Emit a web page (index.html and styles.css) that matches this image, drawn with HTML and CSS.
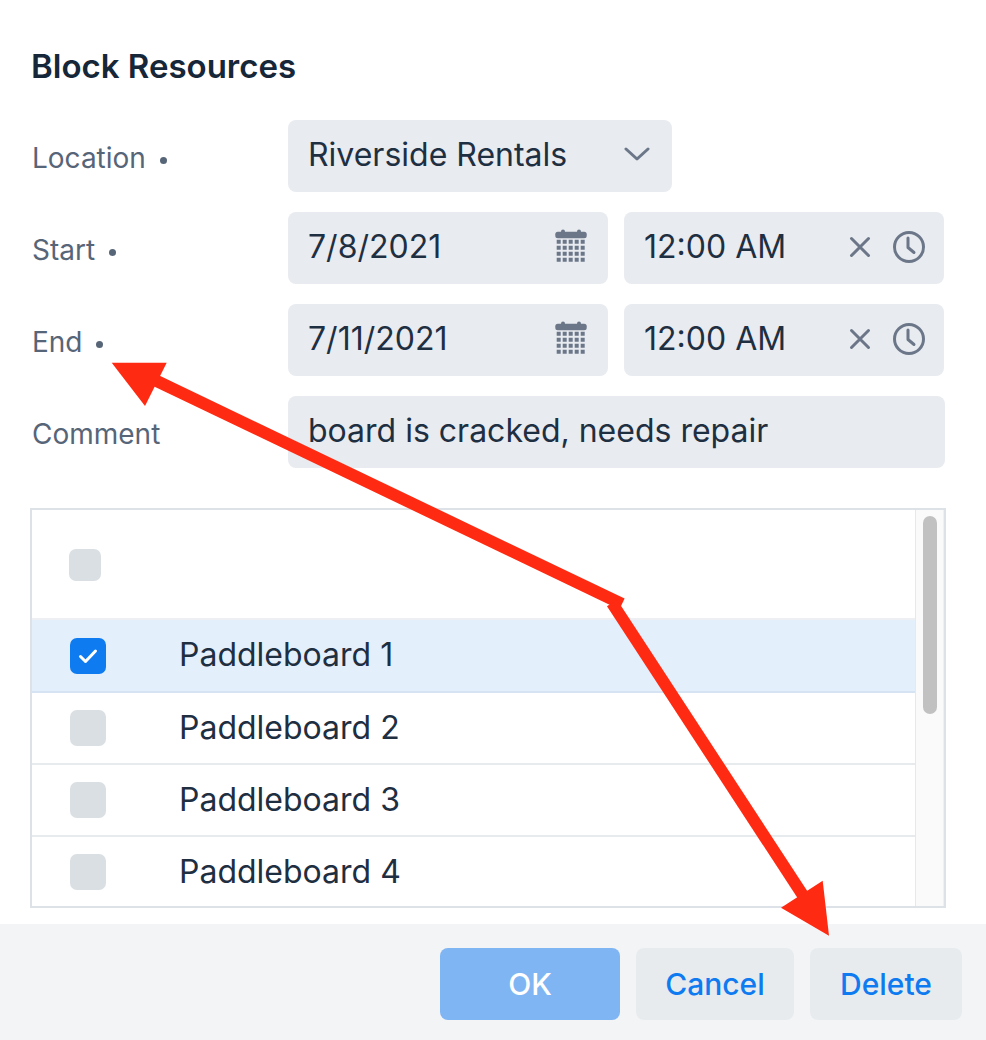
FILE: index.html
```html
<!DOCTYPE html>
<html lang="en">

<head>
    <meta charset="UTF-8">
    <title>Block Resources</title>
    <link rel="stylesheet" href="styles.css">
</head>

<body>

    <div class="dialog">
        <h1>Block Resources</h1>

        <!-- Form -->
        <div class="form-row">
            <label>Location <span class="req"></span></label>
            <div class="field select">
                <span>Riverside Rentals</span>
                <svg class="chevron" width="26" height="14" viewBox="0 0 26 14"><path d="M2 2l11 10L24 2" fill="none" stroke="#6b7788" stroke-width="3" stroke-linecap="round" stroke-linejoin="round"/></svg>
            </div>
        </div>
        <div class="form-row">
            <label>Start <span class="req"></span></label>
            <div class="field date">
                <span>7/8/2021</span>
                <svg class="cal" width="32" height="34" viewBox="0 0 32 34"><use href="#cal-icon"/></svg>
            </div>
            <div class="field time">
                <span>12:00 AM</span>
                <svg class="clear" width="22" height="22" viewBox="0 0 22 22"><path d="M2.5 2.5l17 17M19.5 2.5l-17 17" stroke="#6b7788" stroke-width="3" stroke-linecap="round"/></svg>
                <svg class="clock" width="34" height="34" viewBox="0 0 34 34"><use href="#clock-icon"/></svg>
            </div>
        </div>
        <div class="form-row">
            <label>End <span class="req"></span></label>
            <div class="field date">
                <span>7/11/2021</span>
                <svg class="cal" width="32" height="34" viewBox="0 0 32 34"><use href="#cal-icon"/></svg>
            </div>
            <div class="field time">
                <span>12:00 AM</span>
                <svg class="clear" width="22" height="22" viewBox="0 0 22 22"><path d="M2.5 2.5l17 17M19.5 2.5l-17 17" stroke="#6b7788" stroke-width="3" stroke-linecap="round"/></svg>
                <svg class="clock" width="34" height="34" viewBox="0 0 34 34"><use href="#clock-icon"/></svg>
            </div>
        </div>
        <div class="form-row">
            <label>Comment</label>
            <div class="field comment"><span>board is cracked, needs repair</span></div>
        </div>

        <!-- Resource list -->
        <div class="list">
            <div class="list-rows">
                <div class="list-head"><span class="check small"></span></div>
                <div class="list-row selected">
                    <span class="check on">
                        <svg width="20" height="16" viewBox="0 0 20 16"><path d="M2.5 8.5l5 5L17.5 3" fill="none" stroke="#fff" stroke-width="3" stroke-linecap="round" stroke-linejoin="round"/></svg>
                    </span>
                    <span>Paddleboard 1</span>
                </div>
                <div class="list-row"><span class="check"></span><span>Paddleboard 2</span></div>
                <div class="list-row"><span class="check"></span><span>Paddleboard 3</span></div>
                <div class="list-row"><span class="check"></span><span>Paddleboard 4</span></div>
            </div>
            <div class="scrollbar"><div class="thumb"></div></div>
        </div>

        <!-- Buttons -->
        <div class="footer">
            <button class="ok">OK</button>
            <button class="cancel">Cancel</button>
            <button class="delete">Delete</button>
        </div>
    </div>

    <!-- Shared icons -->
    <svg class="defs" width="0" height="0">
        <defs>
            <g id="cal-icon" fill="#6b7788">
                <rect x="0.3" y="2.7" width="31.4" height="6.6" rx="2.5"/>
                <rect x="6" y="0.6" width="4" height="4" rx="2"/>
                <rect x="22" y="0.6" width="4" height="4" rx="2"/>
                <path d="M1.7 10.7h4v4h-4zM7.7 10.7h4v4h-4zM13.7 10.7h4v4h-4zM19.7 10.7h4v4h-4zM25.7 10.7h4v4h-4z"/>
                <path d="M1.7 16.7h4v4h-4zM7.7 16.7h4v4h-4zM13.7 16.7h4v4h-4zM19.7 16.7h4v4h-4zM25.7 16.7h4v4h-4z"/>
                <path d="M1.7 22.7h4v4h-4zM7.7 22.7h4v4h-4zM13.7 22.7h4v4h-4zM19.7 22.7h4v4h-4zM25.7 22.7h4v4h-4z"/>
                <path d="M1.7 28.7h4v4h-4zM7.7 28.7h4v4h-4zM13.7 28.7h4v4h-4zM19.7 28.7h4v4h-4zM25.7 28.7h4v4h-4z"/>
            </g>
            <g id="clock-icon" fill="none" stroke="#6b7788" stroke-width="3" stroke-linecap="round" stroke-linejoin="round">
                <circle cx="17" cy="17" r="14.5"/>
                <path d="M16 8v9.500l6 5"/>
            </g>
        </defs>
    </svg>

    <!-- Annotation arrows drawn over the dialog -->
    <svg class="arrows" width="986" height="1040" viewBox="0 0 986 1040">
        <path d="M622 604L140 373" fill="none" stroke="#ff2a12" stroke-width="12"/>
        <path d="M612 603L806 900" fill="none" stroke="#ff2a12" stroke-width="12"/>
        <path d="M111.700 362.700L166.700 362.700L145 406z" fill="#ff2a12"/>
        <path d="M781 907.700L822.700 880.700L829 935.700z" fill="#ff2a12"/>
    </svg>

</body>

</html>
```

FILE: styles.css
```css
* {
    box-sizing: border-box;
}

body {
    margin: 0;
    background-color: white;
    font-family: 'Inter', sans-serif;
    color: #1f2f42;
    overflow: hidden;
}

.dialog {
    width: 986px;
    height: 1040px;
    padding-top: 44px;
    display: flex;
    flex-direction: column;
}

h1 {
    margin: 0 0 32px 31px;
    font-size: 33px;
    line-height: 44px;
    font-weight: 600;
    color: #17273a;
}

.form-row {
    display: flex;
    align-items: center;
    gap: 16px;
    height: 72px;
    margin: 0 41px 20px 32px;
}

.form-row label {
    width: 240px;
    flex-shrink: 0;
    font-size: 28px;
    color: #576578;
    padding-top: 4px;
}

.req {
    display: inline-block;
    width: 7px;
    height: 7px;
    margin-left: 6px;
    border-radius: 50%;
    background-color: #576578;
    vertical-align: middle;
}

.field {
    height: 72px;
    display: flex;
    align-items: center;
    padding: 0 20px;
    border-radius: 8px;
    background-color: #e8ebf0;
    font-size: 32px;
    flex-shrink: 0;
}

.field > span {
    flex: 1;
    margin-top: -4px;
}

.select {
    width: 384px;
}

.chevron {
    margin: -4px 2px 0 0;
}

.date {
    width: 320px;
}

.cal {
    margin: -4px 1px 0 0;
}

.time {
    width: 320px;
}

.clear {
    margin: -2px 21px 0 0;
}

.clock {
    margin: -2px -2px 0 0;
}

.comment {
    width: 657px;
}

.list {
    flex: 1;
    min-height: 0;
    margin: 20px 40px 16px 30px;
    display: flex;
    border: 2px solid #dde2e8;
    overflow: hidden;
}

.list-rows {
    flex: 1;
}

.list-head {
    height: 110px;
    padding: 39px 0 0 37px;
    border-bottom: 2px solid #edeff2;
}

.list-row {
    height: 72px;
    display: flex;
    align-items: center;
    padding-left: 38px;
    font-size: 32px;
    border-bottom: 2px solid #e8ebee;
}

.list-row.selected {
    height: 73px;
    background-color: #e4effc;
    border-bottom-color: #d6e3f2;
}

.list-row > span:last-child {
    margin-left: 73px;
    margin-top: -2px;
}

.check {
    width: 36px;
    height: 36px;
    flex-shrink: 0;
    display: flex;
    align-items: center;
    justify-content: center;
    border-radius: 7px;
    background-color: #dadfe4;
}

.check.small {
    width: 32px;
    height: 32px;
}

.check.on {
    background-color: #0f7bf0;
}

.scrollbar {
    width: 29px;
    flex-shrink: 0;
    padding: 6px 6px 0 7px;
    background-color: #fafafa;
    border-left: 1px solid #e8e8e8;
    border-right: 1px solid #f0f0f0;
}

.thumb {
    height: 198px;
    border-radius: 8px;
    background-color: #c1c1c1;
}

.footer {
    height: 116px;
    flex-shrink: 0;
    display: flex;
    justify-content: flex-end;
    gap: 16px;
    padding: 24px 24px 20px 0;
    background-color: #f3f4f6;
}

.footer button {
    height: 72px;
    border: none;
    border-radius: 8px;
    background-color: #e8ebee;
    color: #0f7bf0;
    font-family: 'Inter', sans-serif;
    font-size: 30px;
    font-weight: 500;
    cursor: pointer;
}

.footer .ok {
    width: 180px;
    background-color: #7fb5f3;
    color: white;
}

.footer .cancel {
    width: 158px;
}

.footer .delete {
    width: 152px;
}

.defs {
    position: absolute;
}

.arrows {
    position: absolute;
    top: 0;
    left: 0;
    pointer-events: none;
}
```
